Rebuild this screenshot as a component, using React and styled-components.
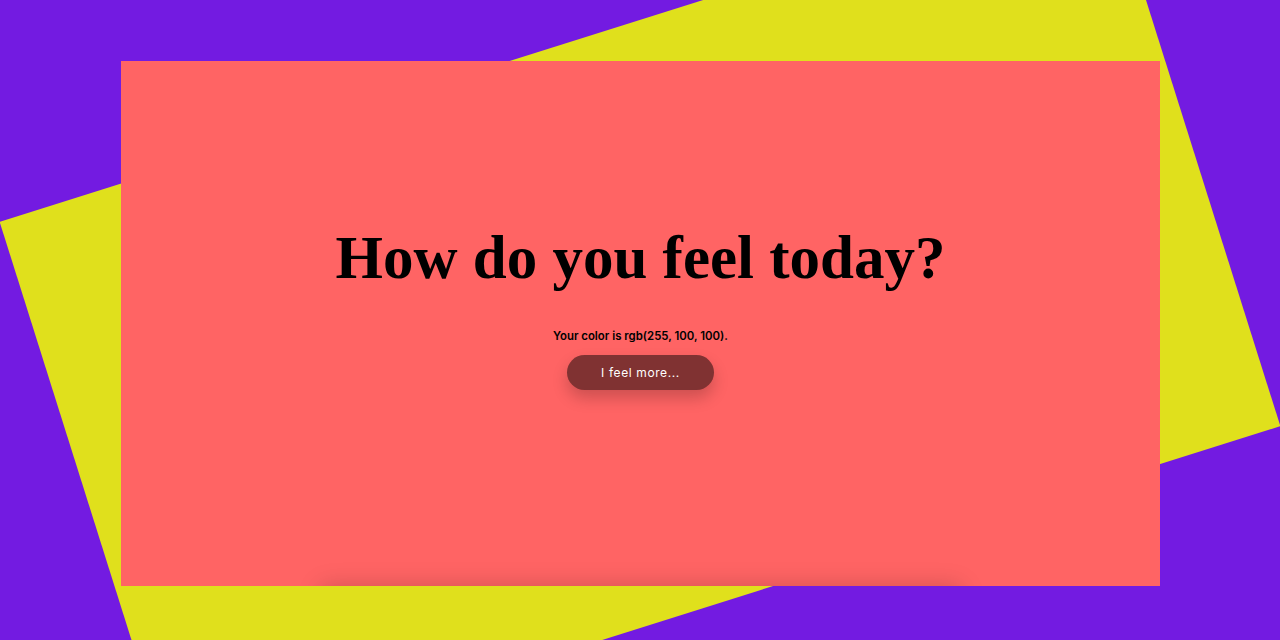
import React from 'react';
import styled, { createGlobalStyle } from 'styled-components';

const GlobalStyle = createGlobalStyle`
  html, body {
    margin: 0;
    padding: 0;
    background: #731be1;
  }
`;

const Page = styled.main`
  display: grid;
  place-items: center;
  height: 100vh;
  padding-top: 7px;
  box-sizing: border-box;
  overflow: hidden;
  background: #731be1;
`;

const Backdrop = styled.div`
  grid-area: 1 / 1;
  width: 1160px;
  height: 580px;
  background: #e0e01c;
  transform: rotate(-17.5deg);
`;

const Card = styled.section`
  grid-area: 1 / 1;
  position: relative;
  z-index: 1;
  width: 1039px;
  height: 525px;
  margin-left: 1px;
  display: flex;
  flex-direction: column;
  align-items: center;
  background: #ff6464;
  overflow: hidden;
`;

const Content = styled.div`
  flex: 1;
  display: flex;
  flex-direction: column;
  align-items: center;
  justify-content: center;
  padding-bottom: 30px;
`;

const Title = styled.h1`
  margin: 0 0 41px;
  font-family: "Liberation Serif", "DejaVu Serif", serif;
  font-weight: 700;
  font-size: 61px;
  line-height: 1;
  color: #000;
`;

const ColorNote = styled.p`
  margin: 0 0 12px;
  font-family: Inter, "Noto Sans", sans-serif;
  font-weight: 600;
  font-size: 11.4px;
  color: #000;
`;

const FeelButton = styled.button`
  width: 147px;
  height: 35px;
  border: none;
  border-radius: 18px;
  background: rgb(128, 50, 50);
  color: #fff;
  font-family: Inter, "Noto Sans", sans-serif;
  font-size: 12px;
  letter-spacing: 0.6px;
  box-shadow: 0 8px 16px rgba(0, 0, 0, 0.2);
  cursor: pointer;
`;

const Drawer = styled.div`
  width: 640px;
  height: 40px;
  margin-bottom: -40px;
  background: #ff6464;
  box-shadow: 0 0 24px rgba(0, 0, 0, 0.18);
`;

export default function App() {
  return (
    <>
      <GlobalStyle />
      <Page>
        <Backdrop />
        <Card>
          <Content>
            <Title>How do you feel today?</Title>
            <ColorNote>Your color is rgb(255, 100, 100).</ColorNote>
            <FeelButton>I feel more...</FeelButton>
          </Content>
          <Drawer />
        </Card>
      </Page>
    </>
  );
}
